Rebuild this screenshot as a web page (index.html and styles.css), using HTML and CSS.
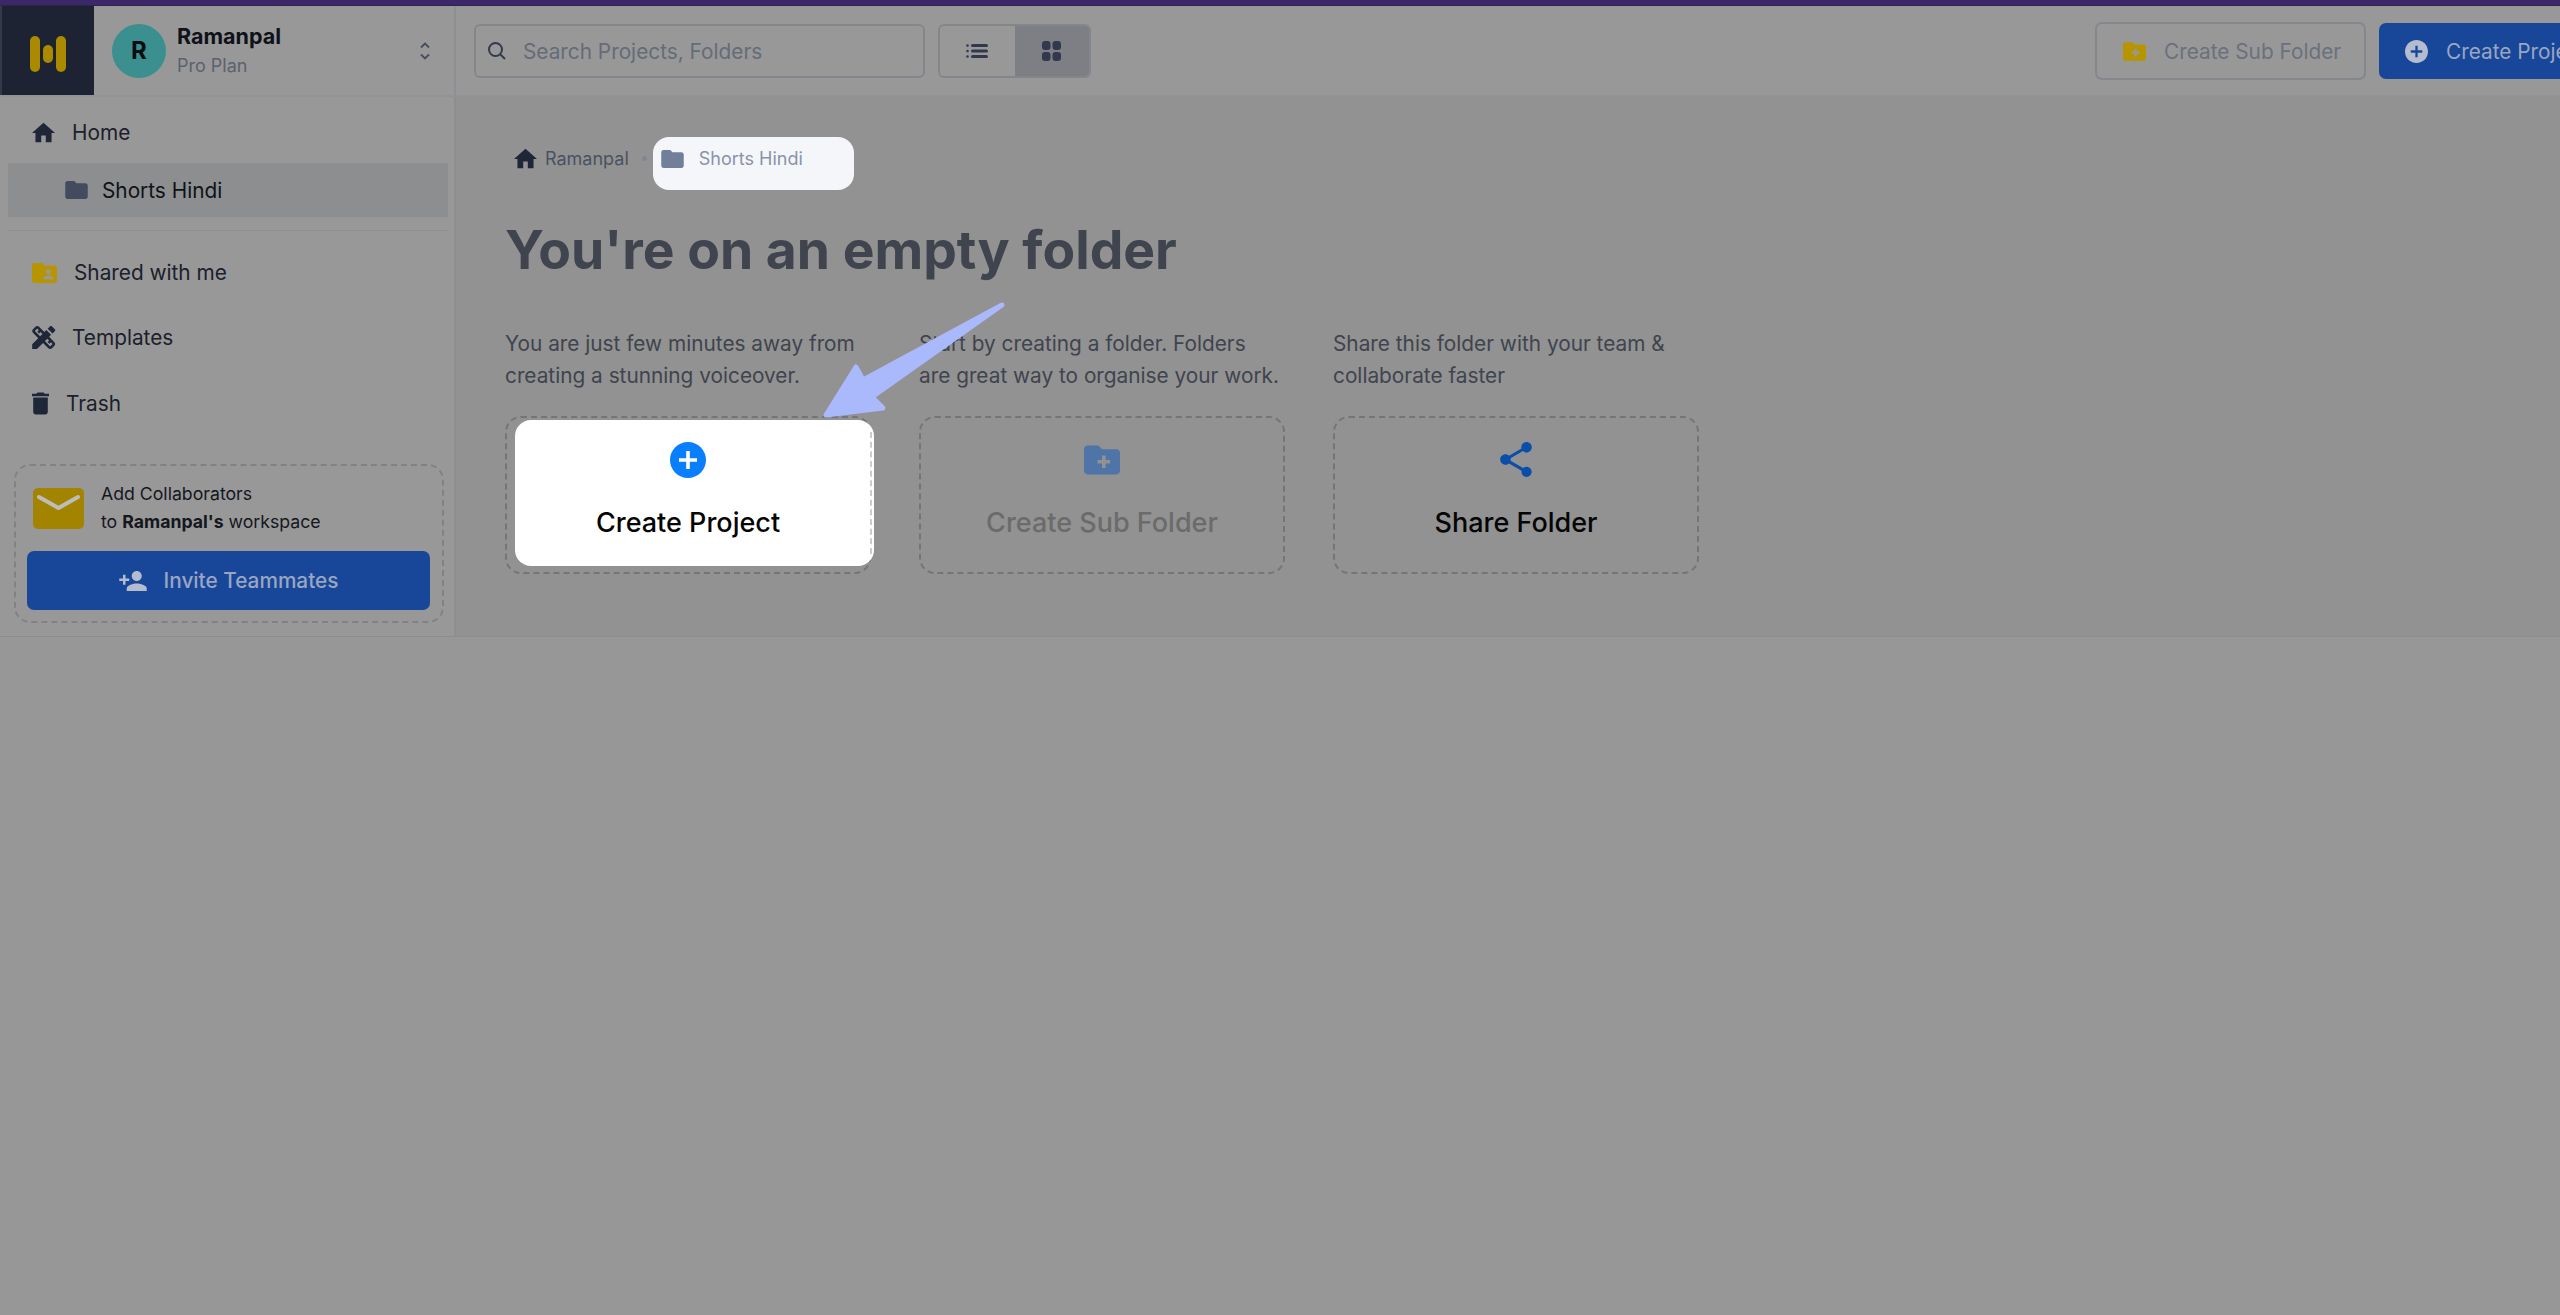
FILE: index.html
```html
<!DOCTYPE html>
<html lang="en">
<head>
<meta charset="utf-8">
<title>Shorts Hindi</title>
<link rel="stylesheet" href="styles.css">
</head>
<body>
<svg class="defs" width="0" height="0" aria-hidden="true">
  <symbol id="i-home" viewBox="2 3 20 17"><path d="M10 20v-6h4v6h5v-8h3L12 3 2 12h3v8z"/></symbol>
  <symbol id="i-folder" viewBox="2 4 20 16"><path d="M10 4H4c-1.1 0-1.99.9-1.99 2L2 18c0 1.1.9 2 2 2h16c1.1 0 2-.9 2-2V8c0-1.1-.9-2-2-2h-8l-2-2z"/></symbol>
  <symbol id="i-shared" viewBox="2 4 20 16"><path d="M20 6h-8l-2-2H4c-1.1 0-1.99.9-1.99 2L2 18c0 1.1.9 2 2 2h16c1.1 0 2-.9 2-2V8c0-1.1-.9-2-2-2zm-5 3c1.1 0 2 .9 2 2s-.9 2-2 2-2-.9-2-2 .9-2 2-2zm4 8h-8v-1c0-1.33 2.67-2 4-2s4 .67 4 2v1z"/></symbol>
  <symbol id="i-newfolder" viewBox="2 4 20 16"><path d="M20 6h-8l-2-2H4c-1.11 0-1.99.89-1.99 2L2 18c0 1.11.89 2 2 2h16c1.11 0 2-.89 2-2V8c0-1.11-.89-2-2-2zm-3.500 8h-2.500v2.500h-2V14H9.500v-2H12V9.500h2V12h2.500v2z"/></symbol>
  <symbol id="i-tools" viewBox="3 3 18.500 18"><path d="M16.240 11.510l1.570-1.570-3.750-3.750-1.570 1.570-4.140-4.130c-.78-.78-2.050-.78-2.830 0l-1.900 1.900c-.78.78-.78 2.050 0 2.830l4.130 4.130L3 17.250V21h3.750l4.760-4.760 4.130 4.130c.95.95 2.230.6 2.830 0l1.900-1.900c.78-.78.78-2.050 0-2.830l-4.130-4.130zm-7.060-.44L5.040 6.940l1.890-1.900L8.200 6.310 7.020 7.500l1.410 1.410 1.190-1.190 1.450 1.450-1.890 1.900zm7.880 7.890l-4.130-4.140 1.900-1.900 1.450 1.450-1.190 1.190 1.410 1.410 1.190-1.190 1.270 1.270-1.900 1.910zM20.710 7.040a.996.996 0 000-1.410l-2.340-2.340c-.47-.47-1.120-.29-1.410 0l-1.830 1.830 3.750 3.750 1.830-1.830z"/></symbol>
  <symbol id="i-trash" viewBox="5 3 14 18"><path d="M6 19c0 1.100.9 2 2 2h8c1.100 0 2-.9 2-2V7H6v12zM19 4h-3.500l-1-1h-5l-1 1H5v2h14V4z"/></symbol>
  <symbol id="i-personadd" viewBox="1 4 22 16"><path d="M15 12c2.210 0 4-1.790 4-4s-1.790-4-4-4-4 1.790-4 4 1.790 4 4 4zm-9-2V7H4v3H1v2h3v3h2v-3h3v-2H6zm9 4c-2.670 0-8 1.340-8 4v2h16v-2c0-2.660-5.330-4-8-4z"/></symbol>
  <symbol id="i-plus" viewBox="2 2 20 20"><path d="M12 2C6.480 2 2 6.480 2 12s4.480 10 10 10 10-4.480 10-10S17.520 2 12 2zm5 11h-4v4h-2v-4H7v-2h4V7h2v4h4v2z"/></symbol>
  <symbol id="i-share" viewBox="3 2 18 20.500"><path d="M18 16.080c-.76 0-1.440.3-1.960.77L8.910 12.700c.05-.23.09-.46.09-.7s-.04-.47-.09-.7l7.050-4.110c.54.5 1.250.81 2.040.81 1.660 0 3-1.340 3-3s-1.340-3-3-3-3 1.340-3 3c0 .24.04.47.09.7L8.040 9.810C7.500 9.310 6.790 9 6 9c-1.660 0-3 1.340-3 3s1.340 3 3 3c.79 0 1.500-.31 2.040-.81l7.120 4.160c-.05.21-.08.43-.08.65 0 1.610 1.310 2.920 2.920 2.920s2.920-1.310 2.920-2.920-1.310-2.920-2.920-2.920z"/></symbol>
</svg>

<div class="topline"></div>

<header class="header">
  <div class="brand">
    <div class="logo">
      <svg width="36" height="36" viewBox="0 0 36 36" class="logo-mark"><rect x="0" y="0" width="10" height="36" rx="5"/><rect x="13" y="9" width="10" height="18" rx="5"/><rect x="26" y="0" width="10" height="36" rx="5"/></svg>
    </div>
    <div class="workspace">
      <div class="avatar">R</div>
      <div class="ws-text">
        <div class="ws-name">Ramanpal</div>
        <div class="ws-plan">Pro Plan</div>
      </div>
      <svg class="chevrons" width="12" height="20" viewBox="0 0 12 20"><path d="M2 6.500 6 2.500l4 4M2 13.500l4 4 4-4"/></svg>
    </div>
  </div>
  <div class="toolbar">
    <div class="search">
      <svg class="search-icon" width="20" height="20" viewBox="0 0 20 20"><circle cx="8.500" cy="8.500" r="6.500"/><path d="M13.500 13.500 18 18"/></svg>
      <span class="search-text">Search Projects, Folders</span>
    </div>
    <div class="toggle">
      <div class="toggle-btn">
        <svg width="22" height="16" viewBox="0 0 22 16"><circle cx="1.500" cy="2.500" r="1.300"/><circle cx="1.500" cy="8" r="1.300"/><circle cx="1.500" cy="13.500" r="1.300"/><rect x="5" y="1" width="17" height="3" rx="1.500"/><rect x="5" y="6.500" width="17" height="3" rx="1.500"/><rect x="5" y="12" width="17" height="3" rx="1.500"/></svg>
      </div>
      <div class="toggle-btn is-on">
        <svg width="19" height="20" viewBox="0 0 19 20"><rect width="8.500" height="9" rx="3"/><rect x="10.500" width="8.500" height="9" rx="3"/><rect y="11" width="8.500" height="9" rx="3"/><rect x="10.500" y="11" width="8.500" height="9" rx="3"/></svg>
      </div>
    </div>
    <div class="actions">
      <div class="btn-outline">
        <svg class="c-yellow" width="23" height="19"><use href="#i-newfolder"/></svg>
        <span>Create Sub Folder</span>
      </div>
      <div class="btn-primary">
        <svg class="c-pale" width="23" height="23"><use href="#i-plus"/></svg>
        <span>Create Project</span>
      </div>
    </div>
  </div>
</header>

<div class="app">
  <aside class="sidebar">
    <nav class="nav">
      <div class="nav-item nav-home">
        <svg class="c-ink i-home" width="23" height="21"><use href="#i-home"/></svg>
        <span>Home</span>
      </div>
      <div class="nav-sub">
        <svg class="c-slate" width="23" height="18"><use href="#i-folder"/></svg>
        <span>Shorts Hindi</span>
      </div>
      <div class="nav-divider"></div>
      <div class="nav-item nav-shared">
        <svg class="c-yellow" width="25" height="20"><use href="#i-shared"/></svg>
        <span>Shared with me</span>
      </div>
      <div class="nav-item nav-templates">
        <svg class="c-ink" width="24" height="23"><use href="#i-tools"/></svg>
        <span>Templates</span>
      </div>
      <div class="nav-item nav-trash">
        <svg class="c-ink" width="17" height="23"><use href="#i-trash"/></svg>
        <span>Trash</span>
      </div>
    </nav>
    <div class="invite">
      <div class="invite-top">
        <svg class="mail" width="51" height="41" viewBox="0 0 51 41"><rect width="51" height="41" rx="5"/><path d="M6 9l19.500 11L45 9"/></svg>
        <div class="invite-text">Add Collaborators<br>to <b>Ramanpal's</b> workspace</div>
      </div>
      <div class="invite-btn">
        <svg class="c-pale" width="28" height="20"><use href="#i-personadd"/></svg>
        <span>Invite Teammates</span>
      </div>
    </div>
  </aside>

  <main class="main">
    <div class="crumbs">
      <svg class="c-ink" width="23" height="21"><use href="#i-home"/></svg>
      <span class="crumb-root">Ramanpal</span>
      <span class="crumb-dot"></span>
      <div class="crumb-current">
        <svg class="c-steel" width="23" height="18"><use href="#i-folder"/></svg>
        <span>Shorts Hindi</span>
      </div>
    </div>
    <h1 class="title">You're on an empty folder</h1>
    <div class="columns">
      <section class="column">
        <p class="desc">You are just few minutes away from<br>creating a stunning voiceover.</p>
        <div class="card">
          <div class="spot"></div>
          <svg class="card-icon c-bright" width="36" height="36"><use href="#i-plus"/></svg>
          <div class="card-label">Create Project</div>
        </div>
      </section>
      <section class="column">
        <p class="desc">Start by creating a folder. Folders<br>are great way to organise your work.</p>
        <div class="card">
          <svg class="card-icon c-muted" width="36" height="29"><use href="#i-newfolder"/></svg>
          <div class="card-label is-disabled">Create Sub Folder</div>
        </div>
      </section>
      <section class="column">
        <p class="desc">Share this folder with your team &amp;<br>collaborate faster</p>
        <div class="card">
          <svg class="card-icon c-share" width="32" height="36"><use href="#i-share"/></svg>
          <div class="card-label">Share Folder</div>
        </div>
      </section>
    </div>
    <svg class="arrow" width="200" height="130" viewBox="815 295 200 130"><polygon points="1001,305 871,397 882,408 825,415 855,367 862,380"/></svg>
  </main>
</div>
</body>
</html>
```

FILE: styles.css
```css
* { box-sizing: border-box; }
html, body { margin: 0; height: 100%; }
body {
  background: #979797;
  font-family: "Inter", "Liberation Sans", sans-serif;
  color: #12151c;
  overflow: hidden;
}
.defs { position: absolute; }
svg { display: block; flex-shrink: 0; fill: currentColor; }

.c-ink { color: #1f2638; }
.c-slate { color: #434b5e; }
.c-yellow { color: #b79500; }
.c-pale { color: #b4bcce; }
.c-steel { color: #717f9b; }
.c-bright { color: #0a7ffe; }
.c-muted { color: #4e74a8; }
.c-share { color: #0a4ea8; }

.topline { height: 6px; background: #3a2868; border-bottom: 1px solid #2c2350; }

.header {
  display: flex;
  height: 91px;
  background: #989898;
  border-bottom: 2px solid #8e9499;
}
.brand { display: flex; width: 456px; flex-shrink: 0; border-right: 2px solid #8d9093; }
.logo {
  width: 94px;
  height: 89px;
  border-left: 2px solid #33394a;
  background: #1d2333;
  display: flex;
  align-items: center;
  justify-content: center;
  padding-top: 7px;
}
.logo-mark { color: #a98a00; }
.workspace { flex: 1; display: flex; align-items: center; padding: 0 25px 0 18px; }
.avatar {
  width: 54px;
  height: 54px;
  border-radius: 50%;
  background: #3c8f8f;
  color: #0a0d12;
  display: flex;
  align-items: center;
  justify-content: center;
  font-size: 24px;
  font-weight: 700;
}
.ws-text { flex: 1; margin-left: 11px; }
.ws-name { font-size: 21.500px; font-weight: 700; line-height: 28px; color: #0f1218; }
.ws-plan { font-size: 18px; line-height: 28px; margin-top: 2px; color: #5b626d; }
.chevrons { fill: none; stroke: #454c5a; stroke-width: 1.800; margin-right: -2px; }

.toolbar { flex: 1; min-width: 0; display: flex; align-items: center; padding: 1px 0 0 18px; overflow: hidden; }
.search {
  width: 451px;
  height: 54px;
  flex-shrink: 0;
  border: 2px solid #83878c;
  border-radius: 6px;
  display: flex;
  align-items: center;
  padding-left: 11px;
}
.search-icon { fill: none; stroke: #333a4a; stroke-width: 2; }
.search-text { margin-left: 16px; font-size: 20.800px; color: #646c78; }
.toggle {
  margin-left: 13px;
  width: 153px;
  height: 54px;
  flex-shrink: 0;
  display: flex;
  border: 2px solid #83878c;
  border-radius: 6px;
  overflow: hidden;
}
.toggle-btn { flex: 1; display: flex; align-items: center; justify-content: center; color: #33394c; }
.toggle-btn.is-on { background: #7d7f85; }
.actions { margin-left: 1004px; display: flex; align-items: center; flex-shrink: 0; }
.btn-outline {
  width: 271px;
  height: 58px;
  border: 2px solid #84888d;
  border-radius: 7px;
  display: flex;
  align-items: center;
  padding-left: 26px;
  gap: 18px;
  font-size: 20.800px;
  color: #6a717c;
}
.btn-primary {
  margin-left: 13px;
  width: 260px;
  height: 56px;
  background: #18479a;
  border-radius: 7px;
  display: flex;
  align-items: center;
  padding-left: 26px;
  gap: 18px;
  font-size: 20.800px;
  color: #9aa6c0;
}

.app { display: flex; height: 540px; background: #929292; border-bottom: 1px solid #8c8c8c; }
.sidebar {
  width: 456px;
  flex-shrink: 0;
  background: #989898;
  border-right: 2px solid #8e8e8e;
  padding: 0 6px 0 8px;
  display: flex;
  flex-direction: column;
}
.nav { flex: 1; }
.nav-item { display: flex; align-items: center; font-size: 20.800px; color: #1b202b; margin-left: 24px; }
.nav-home { height: 66px; gap: 17px; padding-top: 4px; }
.nav-sub {
  height: 54px;
  background: #8d8e90;
  display: flex;
  align-items: center;
  gap: 14px;
  padding-left: 57px;
  font-size: 20.800px;
  color: #0f1218;
}
.nav-divider { height: 1px; margin-top: 13px; background: #8f8f8f; }
.nav-shared { height: 65px; margin-top: 9px; gap: 17px; }
.nav-templates { height: 65px; gap: 16px; }
.nav-trash { height: 65px; gap: 17px; padding-top: 1px; }

.invite {
  margin: 0 4px 13px 6px;
  height: 159px;
  border: 2px dashed #808285;
  border-radius: 16px;
  padding: 14px 12px 0 11px;
}
.invite-top { display: flex; align-items: center; padding-left: 6px; gap: 18px; }
.mail { fill: #a38400; }
.mail path { fill: none; stroke: #bdbdbd; stroke-width: 4; stroke-linecap: round; stroke-linejoin: round; }
.invite-text { font-size: 17.700px; line-height: 28px; color: #14171e; margin-left: -1px; }
.invite-btn {
  margin-top: 15px;
  height: 59px;
  background: #18479a;
  border-radius: 7px;
  display: flex;
  align-items: center;
  justify-content: center;
  gap: 17px;
  font-size: 20.800px;
  font-weight: 500;
  color: #9aa6c0;
}

.main { flex: 1; min-width: 0; position: relative; padding: 40px 0 0 49px; }
.crumbs { display: flex; align-items: center; height: 53px; position: relative; padding: 0 0 10px 9px; }
.crumb-root { margin-left: 8px; font-size: 18px; color: #4a5261; }
.crumb-dot { width: 5px; height: 5px; margin-left: 13px; border-radius: 50%; background: #7f8794; }
.crumb-current {
  margin: 10px 0 0 6px;
  width: 201px;
  height: 53px;
  background: #f5f6f9;
  border-radius: 16px;
  display: flex;
  align-items: center;
  gap: 15px;
  padding: 0 0 10px 8px;
  font-size: 18px;
  color: #8a93a8;
}
.title { margin: 26px 0 0; font-size: 53.400px; line-height: 68px; font-weight: 700; color: #3f444e; }
.columns { display: flex; gap: 48px; margin-top: 44px; }
.column { width: 366px; }
.desc { margin: 0; height: 64px; white-space: nowrap; font-size: 20.800px; line-height: 32px; color: #3f444e; }
.card {
  position: relative;
  margin-top: 24px;
  height: 158px;
  border: 2px dashed #737578;
  border-radius: 16px;
  display: flex;
  flex-direction: column;
  align-items: center;
}
.spot {
  position: absolute;
  left: 8px;
  right: -5px;
  top: 2px;
  bottom: 6px;
  background: #fff;
  border-radius: 16px;
}
.spot::after {
  content: "";
  position: absolute;
  right: 2px;
  top: 12px;
  bottom: 12px;
  border-right: 2px dashed #c9ccd2;
}
.card-icon { position: relative; margin-top: 24px; height: 36px; }
.card-label { position: relative; margin-top: 28px; font-size: 27px; line-height: 34px; font-weight: 500; color: #050505; }
.card-label.is-disabled { color: #6b6b6b; }

.arrow {
  position: absolute;
  left: 360px;
  top: 198px;
  fill: #aab9fc;
  stroke: #aab9fc;
  stroke-width: 5;
  stroke-linejoin: round;
}
```
